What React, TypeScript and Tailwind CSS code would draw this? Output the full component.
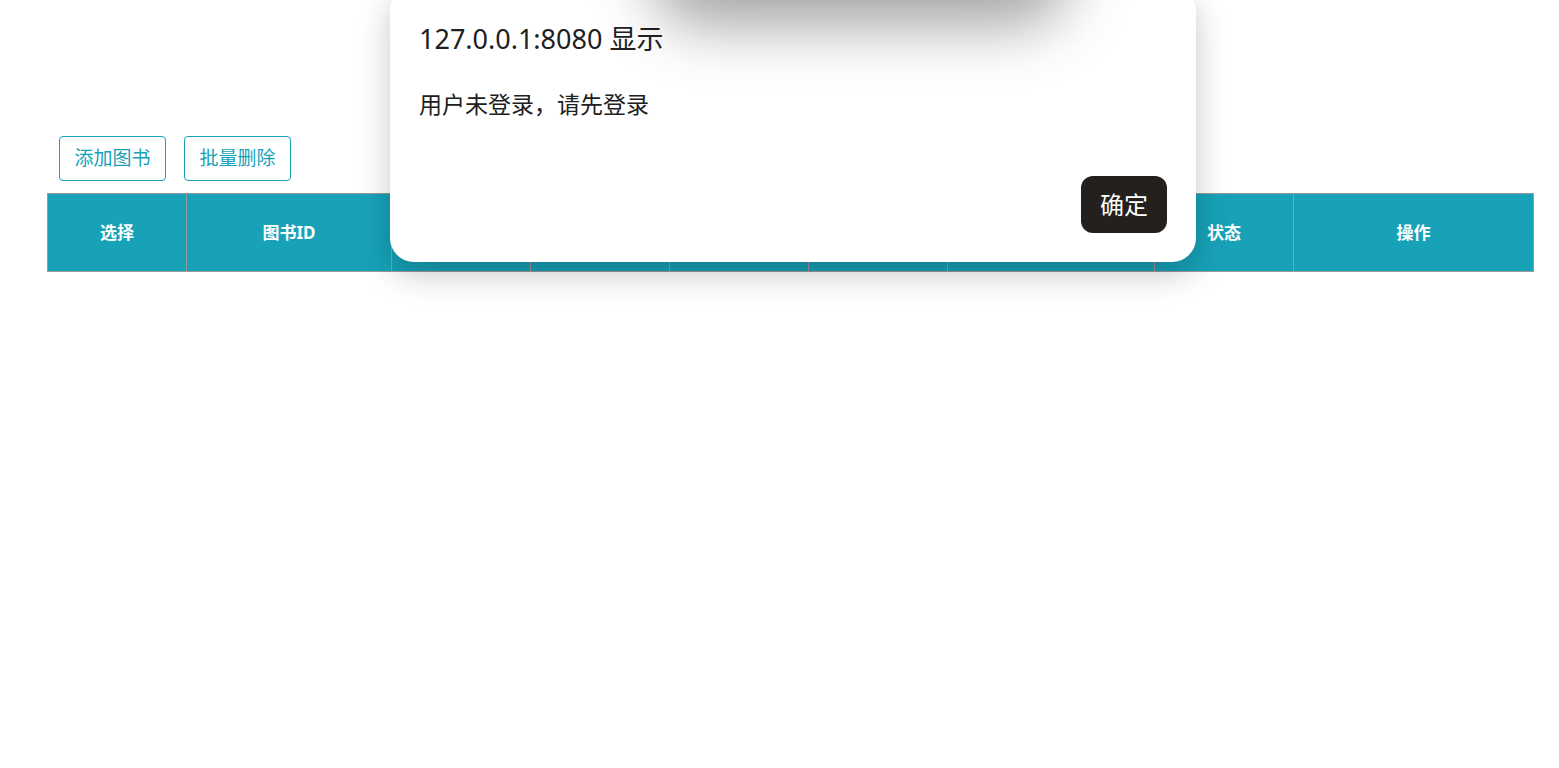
import React from "react";

const cols: { label: string; w: string }[] = [
  { label: "选择", w: "w-[138px]" },
  { label: "图书ID", w: "w-[205px]" },
  { label: "书名", w: "w-[139px]" },
  { label: "作者", w: "w-[139px]" },
  { label: "价格", w: "w-[139px]" },
  { label: "库存", w: "w-[139px]" },
  { label: "出版社", w: "w-[207px]" },
  { label: "状态", w: "w-[139px]" },
  { label: "操作", w: "flex-1" },
];

export default function App() {
  return (
    <div
      className="relative w-[1559px] h-[768px] bg-white overflow-hidden"
      style={{ fontFamily: '"Noto Sans", "Noto Sans CJK SC", sans-serif' }}
    >
      <div className="pt-[136px] pl-[47px] w-[1534px] flex flex-col gap-[12px]">
        <div className="flex gap-[18px] pl-[12px]">
          <button className="w-[107px] h-[45px] border border-[#17a2b8] rounded-[4px] text-[#17a2b8] text-[19px] bg-white">
            添加图书
          </button>
          <button className="w-[107px] h-[45px] border border-[#17a2b8] rounded-[4px] text-[#17a2b8] text-[19px] bg-white">
            批量删除
          </button>
        </div>
        <div className="flex h-[79px] bg-[#17a2b8] border border-[#9a9a9a]">
          {cols.map((c, i) => (
            <div
              key={c.label}
              className={`${c.w} flex items-center justify-center text-white font-bold text-[17px] ${
                i > 0 ? "border-l border-[#9a9a9a]" : ""
              }`}
            >
              {c.label}
            </div>
          ))}
        </div>
      </div>

      {/* dialog */}
      <div className="absolute left-[390px] top-[-14px] w-[806px] h-[276px] bg-white rounded-[24px] shadow-[0_12px_32px_rgba(0,0,0,0.22)] overflow-hidden flex flex-col pl-[29px] pr-[29px] pt-[34px]">
        <div className="absolute left-[260px] top-[-72px] w-[420px] h-[112px] rounded-full bg-[#9a9a9a] blur-[30px] opacity-90" />
        <div className="relative text-[27px] leading-[38px] text-[#202020]">127.0.0.1:8080 显示</div>
        <div className="relative mt-[31px] text-[23px] leading-[30px] text-[#202020]">用户未登录，请先登录</div>
        <div className="relative mt-[57px] flex justify-end">
          <button className="w-[86px] h-[57px] rounded-[12px] bg-[#24201e] text-white text-[24px]">确定</button>
        </div>
      </div>
    </div>
  );
}
